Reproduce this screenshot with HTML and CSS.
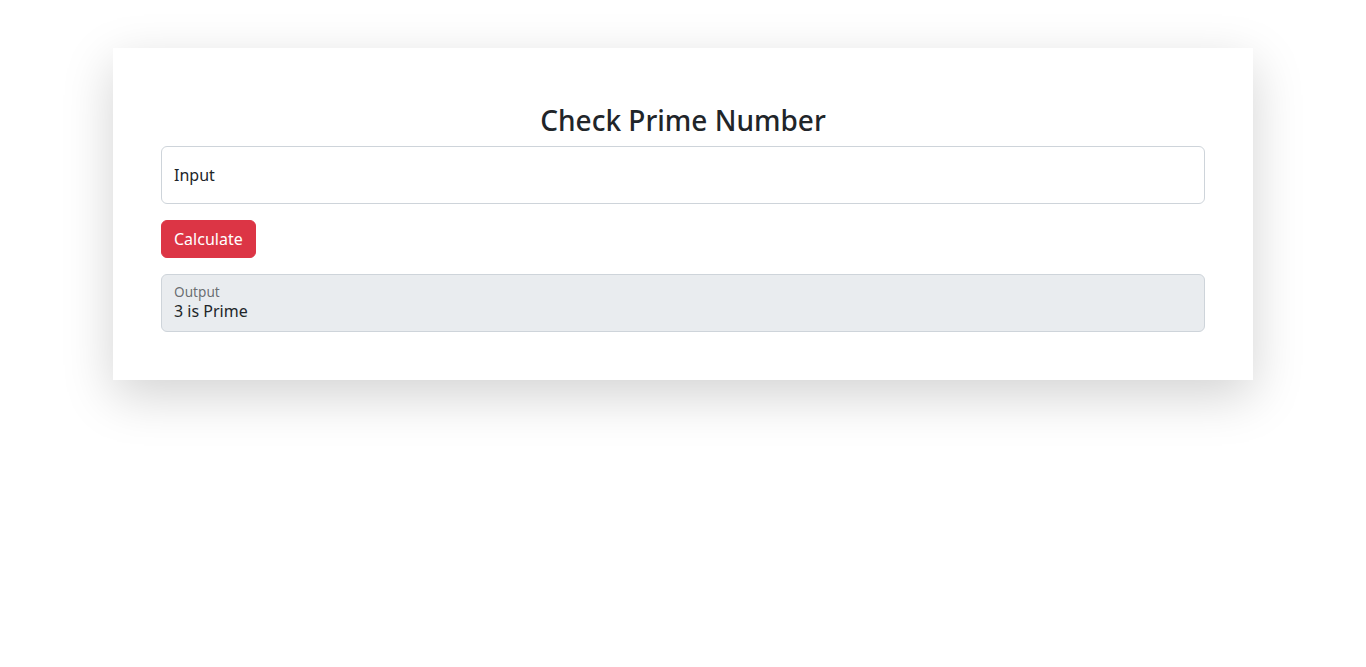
FILE: index.html
```
<!DOCTYPE html>
<html lang="en">
<head>
<meta charset="utf-8">
<title>Check Prime Number</title>
<link rel="stylesheet" href="styles.css">
</head>
<body>
<main class="card">
  <h3 class="title">Check Prime Number</h3>
  <div class="floating">
    <input class="field" type="text" id="num" placeholder="Input">
    <label class="label" for="num">Input</label>
  </div>
  <button class="btn" type="button">Calculate</button>
  <div class="floating output">
    <input class="field readonly" type="text" id="out" value="3 is Prime" readonly>
    <label class="label small" for="out">Output</label>
  </div>
</main>
</body>
</html>
```
FILE: styles.css
```
* { box-sizing: border-box; }
html, body { margin: 0; padding: 0; background: #fff; }
body {
  min-height: 100vh;
  padding: 48px 0;
  font-family: "Noto Sans", "Liberation Sans", sans-serif;
  font-size: 16px;
  line-height: 1.5;
  color: #212529;
}
.card {
  width: 1140px;
  margin: 0 auto;
  padding: 48px;
  background: #fff;
  box-shadow: 0 16px 48px rgba(0, 0, 0, 0.175);
  display: flex;
  flex-direction: column;
  align-items: flex-start;
}
.title {
  align-self: stretch;
  margin: 8px 0 8px;
  font-size: 28px;
  font-weight: 500;
  line-height: 1.2;
  text-align: center;
}
.floating {
  position: relative;
  align-self: stretch;
}
.field {
  display: block;
  width: 100%;
  height: 58px;
  padding: 16px 12px;
  font: inherit;
  color: #212529;
  background: #fff;
  border: 1px solid #ced4da;
  border-radius: 6px;
  outline: none;
}
.field::placeholder { color: transparent; }
.field.readonly {
  background: #e9ecef;
  padding-top: 26px;
  padding-bottom: 10px;
}
.label {
  position: absolute;
  top: 0;
  left: 0;
  height: 100%;
  padding: 16px 12px;
  border: 1px solid transparent;
  pointer-events: none;
  color: #212529;
}
.label.small {
  transform-origin: 0 0;
  transform: scale(0.85) translateY(-8px) translateX(2.4px);
  color: rgba(33, 37, 41, 0.65);
}
.btn {
  margin-top: 16px;
  padding: 6px 12px;
  font: inherit;
  color: #fff;
  background: #dc3545;
  border: 1px solid #dc3545;
  border-radius: 6px;
  cursor: pointer;
}
.output { margin-top: 16px; }
```
